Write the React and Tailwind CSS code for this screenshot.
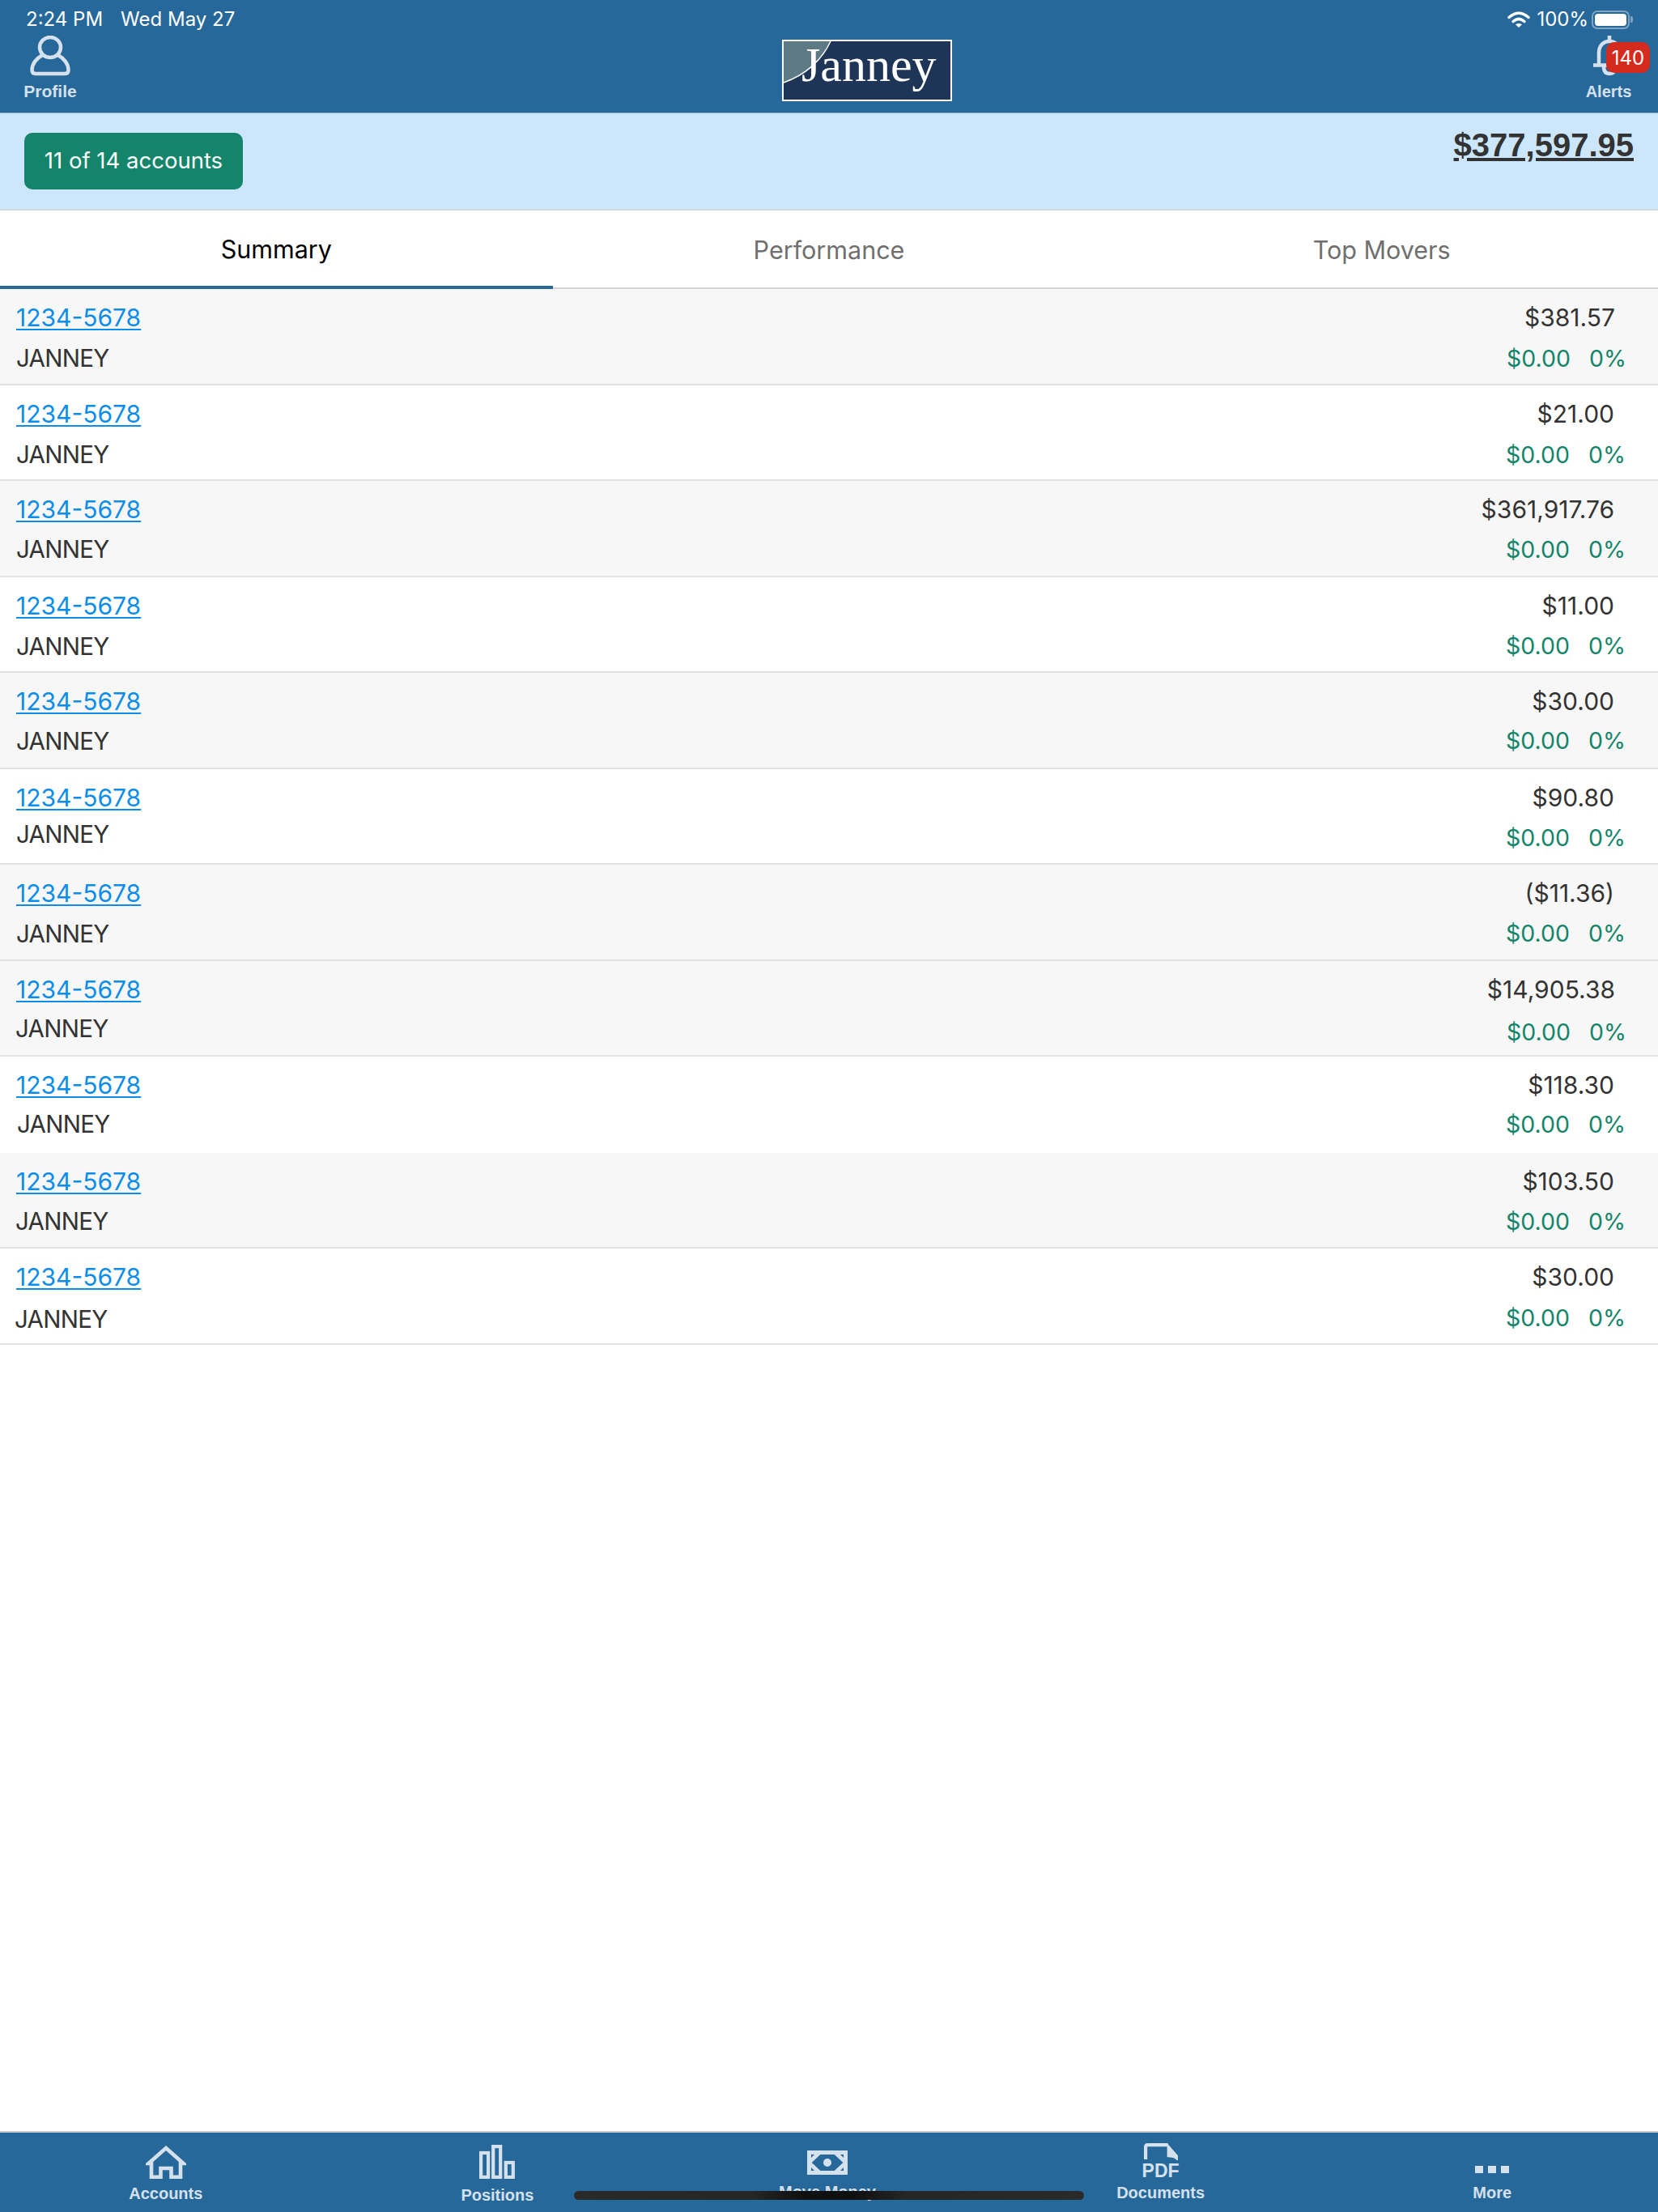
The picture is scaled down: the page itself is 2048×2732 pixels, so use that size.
import React from "react";

const rows = [
  { amt: "$381.57", bg: "bg-[#f7f7f7]", n: "mt-[14px]", g: "mt-[15px]", pr: "pr-[39px]", nx: "ml-0" },
  { amt: "$21.00", bg: "bg-white", n: "mt-[14px]", g: "mt-[15px]", pr: "pr-[40px]", nx: "ml-0" },
  { amt: "$361,917.76", bg: "bg-[#f7f7f7]", n: "mt-[13px]", g: "mt-[14px]", pr: "pr-[40px]", nx: "ml-0" },
  { amt: "$11.00", bg: "bg-white", n: "mt-[14px]", g: "mt-[14px]", pr: "pr-[40px]", nx: "ml-0" },
  { amt: "$30.00", bg: "bg-[#f7f7f7]", n: "mt-[13px]", g: "mt-[13px]", pr: "pr-[40px]", nx: "ml-0" },
  { amt: "$90.80", bg: "bg-white", n: "mt-[9px]", g: "mt-[14px]", pr: "pr-[40px]", nx: "ml-0" },
  { amt: "($11.36)", bg: "bg-[#f7f7f7]", n: "mt-[14px]", g: "mt-[14px]", pr: "pr-[40px]", nx: "ml-0" },
  { amt: "$14,905.38", bg: "bg-[#f7f7f7]", n: "mt-[12px]", g: "mt-[17px]", pr: "pr-[39px]", nx: "-ml-px" },
  { amt: "$118.30", bg: "bg-white", n: "mt-[12px]", g: "mt-[13px]", pr: "pr-[40px]", nx: "ml-[1px]", noBorder: true },
  { amt: "$103.50", bg: "bg-[#f7f7f7]", n: "mt-[13px]", g: "mt-[14px]", pr: "pr-[40px]", nx: "-ml-px" },
  { amt: "$30.00", bg: "bg-white", n: "mt-[16px]", g: "mt-[15px]", pr: "pr-[40px]", nx: "-ml-[2px]" },
];

function Row({ r }) {
  return (
    <div className={`flex justify-between h-[118.55px] box-border ${r.bg} ${r.noBorder ? "" : "border-b-2 border-[#e2e2e2]"}`}>
      <div className="flex flex-col pl-[20px] pt-[17px]">
        <a className="text-[30px] leading-[36px] text-[#0b8de9] underline decoration-2 underline-offset-[3px]">1234-5678</a>
        <div className={`text-[29.5px] leading-[36px] tracking-[-0.7px] text-[#333333] ${r.n} ${r.nx}`}>JANNEY</div>
      </div>
      <div className={`flex flex-col items-end pt-[17px] ${r.pr}`}>
        <div className="text-[30px] leading-[36px] text-[#333333] mr-[14px]">{r.amt}</div>
        <div className={`flex gap-[23px] text-[28.5px] leading-[36px] text-[#14856a] ${r.g}`}>
          <span>$0.00</span>
          <span>0%</span>
        </div>
      </div>
    </div>
  );
}

function NavLabel({ children, className = "" }) {
  return <div className={`font-['Liberation_Sans'] font-bold text-[20px] leading-[24px] text-[#d5e1ec] whitespace-nowrap ${className}`}>{children}</div>;
}

export default function App() {
  return (
    <div className="relative w-[2048px] h-[2732px] bg-white overflow-hidden flex flex-col font-['Inter','Liberation_Sans',sans-serif]">
      {/* Header */}
      <header className="h-[140px] shrink-0 bg-[#27689a] border-b border-[#8fb0c9] box-border">
        <div className="h-[44px] flex items-center justify-between pl-[32px] pr-[31px] pt-[4px] text-white text-[24px] leading-none">
          <div className="flex gap-[22px]">
            <span>2:24 PM</span>
            <span>Wed May 27</span>
          </div>
          <div className="flex items-center gap-[8px]">
            <svg width="28" height="20" viewBox="0 0 28 20" fill="none">
              <path d="M2 7.5C9.5 0.5 18.5 0.5 26 7.5" stroke="white" strokeWidth="3.4" strokeLinecap="round" />
              <path d="M7 12.5C11.5 8.5 16.5 8.5 21 12.5" stroke="white" strokeWidth="3.4" strokeLinecap="round" />
              <path d="M14 20L10 16.3C12.5 14.4 15.5 14.4 18 16.3Z" fill="white" />
            </svg>
            <span>100%</span>
            <div className="flex items-center -ml-[4px]">
              <div className="w-[47px] h-[23px] rounded-[7px] border-2 border-[#7ea5c4] p-[2px] box-border">
                <div className="w-full h-full rounded-[4px] bg-white"></div>
              </div>
              <div className="w-[3px] h-[8px] rounded-r-[2px] bg-[#7ea5c4] ml-[1px]"></div>
            </div>
          </div>
        </div>
        <div className="flex h-[95px]">
          <div className="w-[966px] shrink-0 pl-[30px]">
            <div className="w-[64px] flex flex-col items-center">
              <svg width="50" height="50" viewBox="0 0 50 50" fill="none" stroke="#d5e1ec" strokeWidth="4.5">
                <ellipse cx="25" cy="14.5" rx="13" ry="12.5" />
                <path d="M15.5 24C8 28 2.5 35 2.5 42.5Q2.5 47 7 47H43Q47.5 47 47.5 42.5C47.5 35 42 28 34.5 24" strokeLinejoin="round" />
              </svg>
              <NavLabel className="mt-[7px] text-[21px]">Profile</NavLabel>
            </div>
          </div>
          <div className="w-[210px] shrink-0 mt-[5px]">
            <svg width="210" height="76" viewBox="0 0 210 76" className="overflow-visible">
              <rect x="1" y="1" width="208" height="74" fill="#1e3557" stroke="#ffffff" strokeWidth="2" />
              <path d="M2 2H60C49 26 28 44 2 53Z" fill="#5d7a86" />
              <path d="M60 2C49 26 28 44 2 53" fill="none" stroke="#ffffff" strokeWidth="1.5" />
              <text x="24" y="51" fontFamily="Liberation Serif" fontSize="60" fill="#ffffff">Janney</text>
            </svg>
          </div>
          <div className="ml-auto mr-[32px] w-[58px] flex flex-col items-center relative">
            <svg width="40" height="50" viewBox="0 0 40 50" fill="none" stroke="#d5e1ec" strokeWidth="4.5" className="-mr-px">
              <path d="M20 0V7M7 35V21C7 12 13 7 20 7C27 7 33 12 33 21V35M0 36.5H40M13 38Q13 47 20 47Q27 47 27 38" />
            </svg>
            <NavLabel className="mt-[7px]">Alerts</NavLabel>
            <div className="absolute left-[26px] top-[8px] w-[54px] h-[38px] rounded-[10px] bg-[#d52b1e] text-white text-[24px] leading-[40px] text-center">140</div>
          </div>
        </div>
      </header>

      {/* Summary band */}
      <div className="h-[120px] shrink-0 box-border bg-[#cce7fb] border-b-2 border-[#d6d9db] flex justify-between pl-[30px] pr-[30px]">
        <button className="mt-[24px] w-[270px] h-[70px] rounded-[10px] bg-[#14856a] text-white text-[27.5px] text-center">11 of 14 accounts</button>
        <div className="mt-[13px] font-['Liberation_Sans'] font-bold text-[40px] leading-[52px] text-[#333333] underline">$377,597.95</div>
      </div>

      {/* Tabs */}
      <div className="h-[97px] shrink-0 box-border grid grid-cols-3 border-b-2 border-[#d4d4d4] text-[30.5px]">
        <div className="flex items-center justify-center pt-[3px] text-black border-b-[4px] -mb-[2px] border-[#27689a] h-[97px] box-border">Summary</div>
        <div className="flex items-center justify-center pt-[2px] text-[#6f6f6f]">Performance</div>
        <div className="flex items-center justify-center pt-[2px] text-[#6f6f6f]">Top Movers</div>
      </div>

      {/* List */}
      <div className="flex flex-col">
        {rows.map((r, i) => (
          <Row key={i} r={r} />
        ))}
      </div>

      {/* Bottom nav */}
      <nav className="mt-auto h-[100px] shrink-0 box-border border-t-2 border-[#c9c9c9] bg-[#27689a] grid grid-cols-5">
        <div className="flex flex-col items-center pt-[15px]">
          <svg width="50" height="42" viewBox="0 0 50 42" fill="none" stroke="#d5e1ec" strokeWidth="4.6" strokeLinejoin="miter">
            <path d="M25 4L46.5 23H43V39.7H31.5V29H18.5V39.7H7V23H3.5Z" />
          </svg>
          <NavLabel className="mt-[6px]">Accounts</NavLabel>
        </div>
        <div className="flex flex-col items-center pt-[15px]">
          <svg width="44" height="42" viewBox="0 0 44 42" fill="none" stroke="#d5e1ec" strokeWidth="4.2">
            <rect x="2.1" y="10" width="9" height="29.9" />
            <rect x="17.2" y="2.1" width="9" height="37.8" />
            <rect x="32.8" y="22" width="9" height="17.9" />
          </svg>
          <NavLabel className="mt-[8px]">Positions</NavLabel>
        </div>
        <div className="flex flex-col items-center pt-[22px] pr-[4px]">
          <svg width="50" height="30" viewBox="0 0 50 30">
            <rect width="50" height="30" fill="#d5e1ec" />
            <path d="M5.7 15L16.3 5H33.7L44.3 15L33.7 25H16.3Z" fill="#27689a" />
            <circle cx="25" cy="15" r="5" fill="#d5e1ec" />
            <path d="M5 5H9L5 9ZM45 5H41L45 9ZM5 25H9L5 21ZM45 25H41L45 21Z" fill="#27689a" />
          </svg>
          <NavLabel className="mt-[9px]">Move Money</NavLabel>
        </div>
        <div className="flex flex-col items-center pt-[13px]">
          <div className="flex flex-col items-center h-[44px]">
            <svg width="44" height="22" viewBox="0 0 44 22" fill="none">
              <path d="M2.2 21V5Q2.2 2.2 5 2.2H31" stroke="#d5e1ec" strokeWidth="4.4" />
              <path d="M30 0L44 16V22H42C41 19 35 18 30 18Z" fill="#d5e1ec" />
            </svg>
            <div className="font-['Liberation_Sans'] font-bold text-[23px] leading-[20px] text-[#d5e1ec] mt-[3px]">PDF</div>
          </div>
          <NavLabel className="mt-[5px]">Documents</NavLabel>
        </div>
        <div className="flex flex-col items-center pt-[41px]">
          <div className="flex gap-[6px] h-[9px]">
            <div className="w-[10px] h-[9px] bg-[#d5e1ec]"></div>
            <div className="w-[10px] h-[9px] bg-[#d5e1ec]"></div>
            <div className="w-[10px] h-[9px] bg-[#d5e1ec]"></div>
          </div>
          <NavLabel className="mt-[12px]">More</NavLabel>
        </div>
      </nav>

      {/* Home indicator */}
      <div className="absolute left-[709px] top-[2706px] w-[630px] h-[11px] rounded-full bg-[linear-gradient(90deg,#2a2a2a_0%,#262626_35%,#101010_45%,#101010_55%,#262626_65%,#2a2a2a_100%)]"></div>
    </div>
  );
}
